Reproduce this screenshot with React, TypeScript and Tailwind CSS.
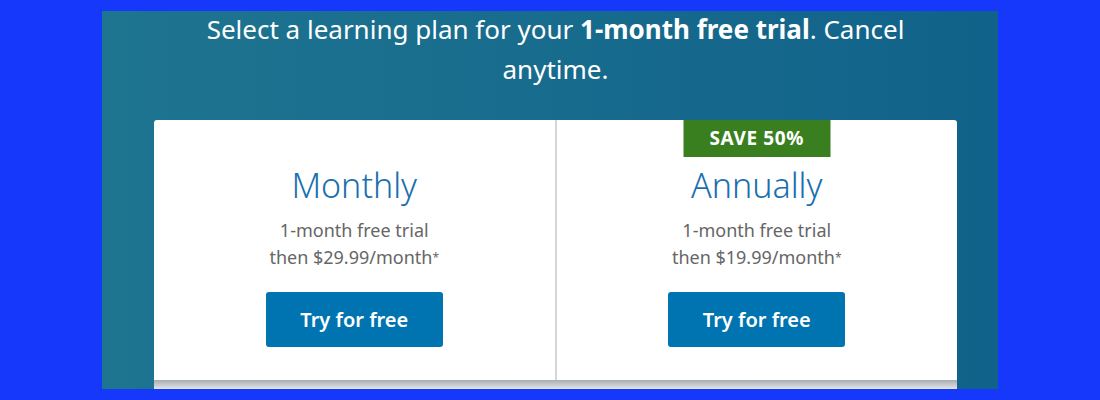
import React from "react";

const plans = [
  { name: "Monthly", price: "$29.99", badge: "" },
  { name: "Annually", price: "$19.99", badge: "SAVE 50%" },
];

function PlanCard({ name, price, badge }: { name: string; price: string; badge: string }) {
  return (
    <div className="relative flex-1 flex flex-col items-center pt-[45px]">
      {badge && (
        <div className="absolute top-0 left-1/2 -translate-x-1/2 w-[147px] h-[37px] bg-[#3a7f1f] text-white font-bold text-[19px] flex items-center justify-center tracking-[0.6px]">
          {badge}
        </div>
      )}
      <h2 className="text-[34px] font-light text-[#1a6fae] leading-[40px]">{name}</h2>
      <p className="mt-[12px] text-[18px] text-[#666] leading-[27px] text-center">
        1-month free trial
        <br />
        then {price}/month<sup className="text-[12px] relative -top-[2px]">*</sup>
      </p>
      <button className="mt-[21px] w-[177px] h-[55px] bg-[#0073b1] rounded-[3px] text-white text-[20px] font-semibold">
        Try for free
      </button>
    </div>
  );
}

export default function App() {
  return (
    <div
      className="w-[1100px] h-[400px] bg-[#1538fa] pt-[11px] pl-[102px]"
      style={{ fontFamily: '"Noto Sans", "Open Sans", sans-serif' }}
    >
      <div className="w-[896px] h-[378px] bg-gradient-to-r from-[#1e7590] to-[#11628a] flex flex-col">
        <div className="ml-[52px] w-[803px]">
          <h1 className="-mt-[2px] px-[45px] text-center text-white text-[26px] leading-[40px]">
            Select a learning plan for your <b className="font-bold">1-month free trial</b>. Cancel anytime.
          </h1>
          <div className="mt-[31px] h-[260px] bg-white rounded-t-[3px] flex">
            <PlanCard {...plans[0]} />
            <div className="w-[2px] bg-[#d6d6d6]" />
            <PlanCard {...plans[1]} />
          </div>
          <div className="h-[9px] bg-gradient-to-b from-[#a9adb1] to-[#e3e6e9]" />
        </div>
      </div>
    </div>
  );
}
